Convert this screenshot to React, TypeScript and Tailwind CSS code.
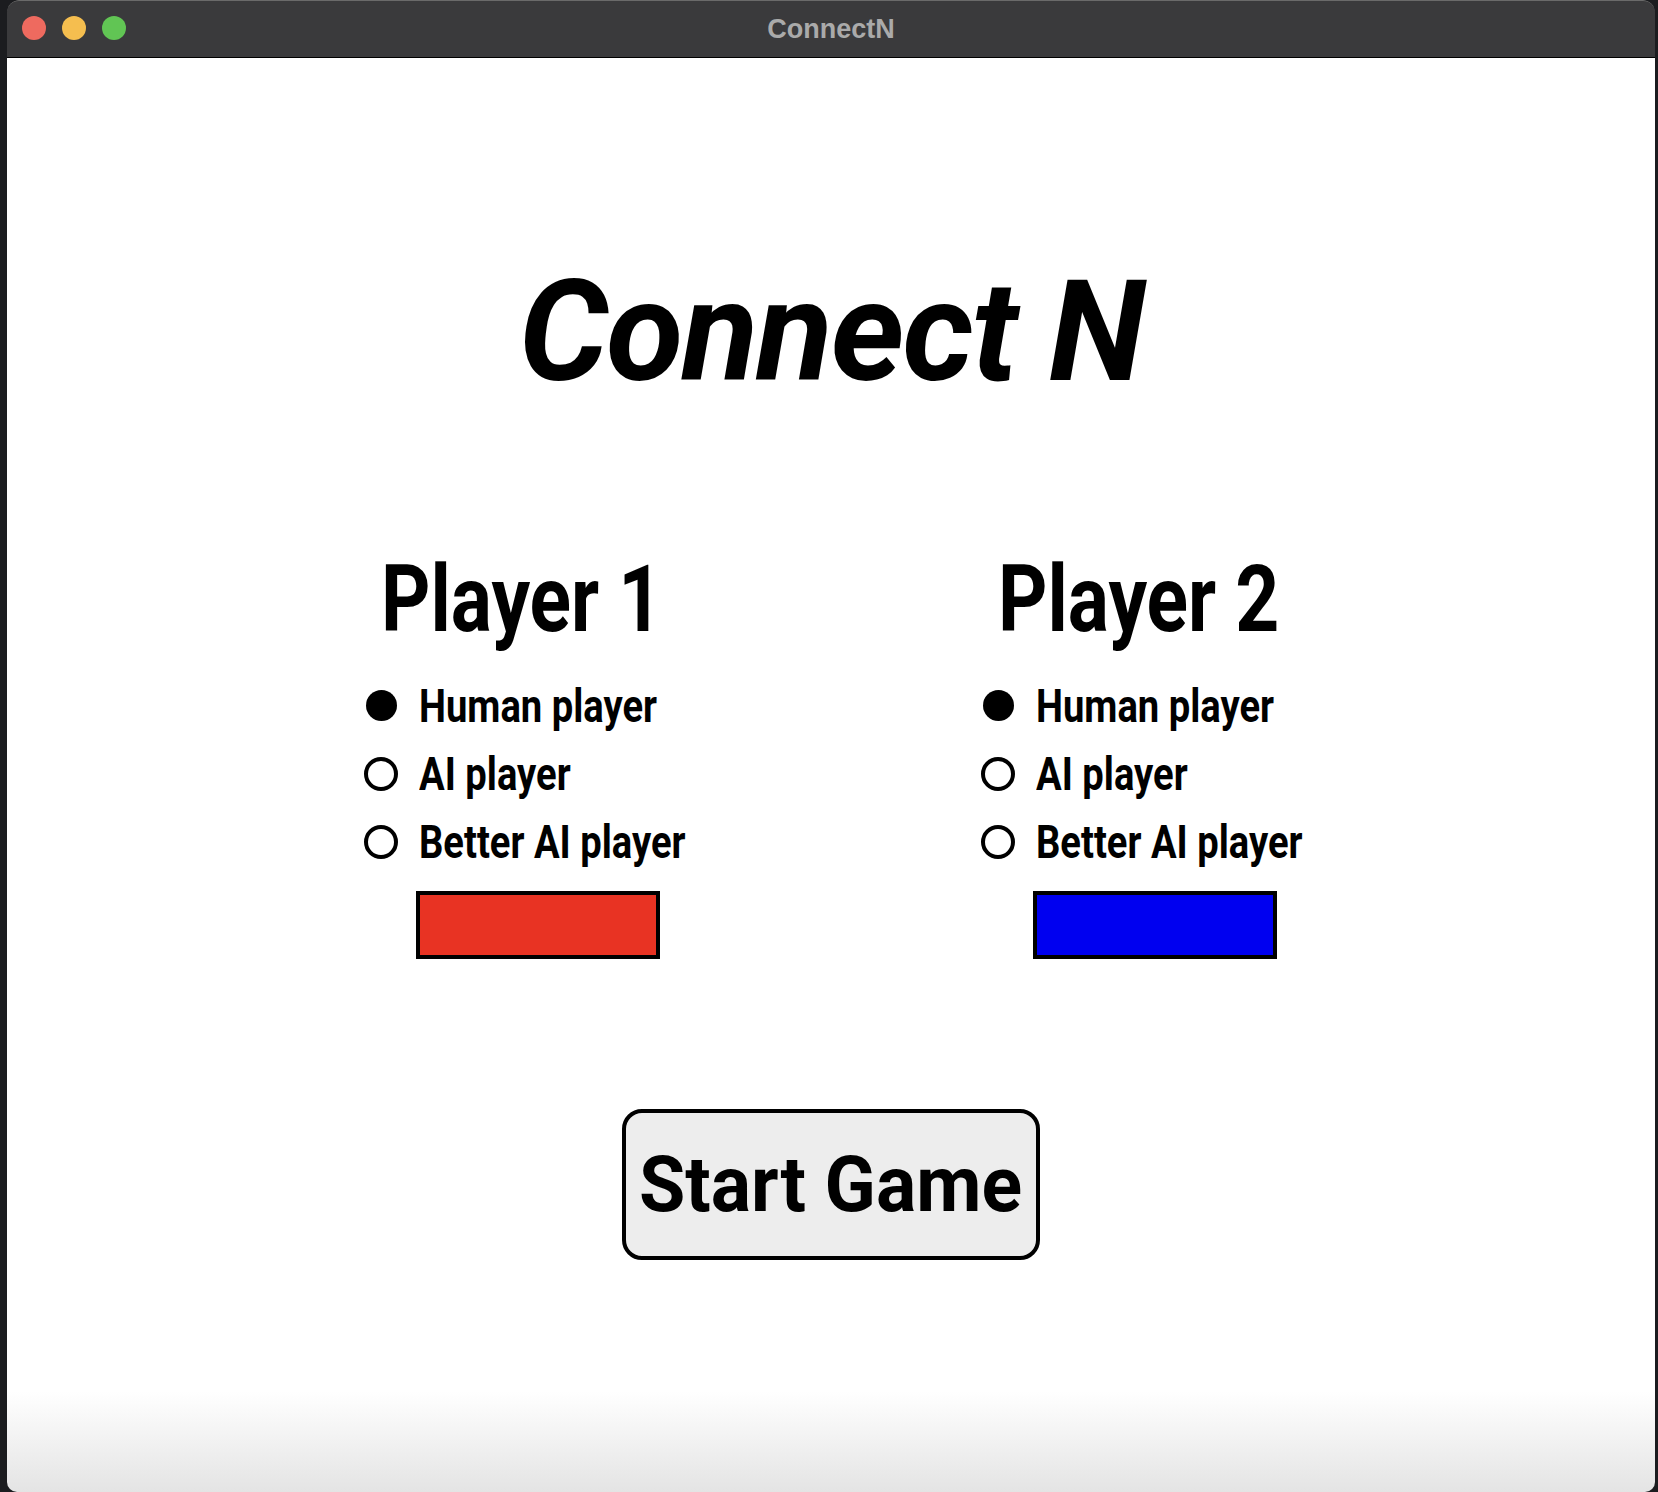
import React from "react";

const font = { fontFamily: "Roboto, 'Liberation Sans', sans-serif" };

function Radio({ checked, label }: { checked: boolean; label: string }) {
  return (
    <div className="flex items-center h-[45px]">
      <div className="w-[34px] h-[34px] flex items-center justify-center shrink-0">
        {checked ? (
          <div className="w-[31px] h-[31px] rounded-full bg-black" />
        ) : (
          <div className="w-[34px] h-[34px] rounded-full border-[4px] border-black bg-white" />
        )}
      </div>
      <span className="ml-[21px] inline-block origin-left scale-x-[0.83] text-[46px] leading-none font-bold text-black whitespace-nowrap">
        {label}
      </span>
    </div>
  );
}

function PlayerColumn({ name, color }: { name: string; color: string }) {
  return (
    <div className="flex flex-col w-[330px]">
      <div className="ml-[17px]">
        <span className="inline-block origin-left scale-x-[0.835] text-[92px] leading-none font-bold text-black whitespace-nowrap">
          {name}
        </span>
      </div>
      <div className="mt-[37px] flex flex-col gap-[23px]">
        <Radio checked label="Human player" />
        <Radio checked={false} label="AI player" />
        <Radio checked={false} label="Better AI player" />
      </div>
      <div
        className={`mt-[27px] ml-[52px] w-[244px] h-[68px] border-[4px] border-black ${color}`}
      />
    </div>
  );
}

export default function App() {
  return (
    <div className="w-[1658px] h-[1492px] bg-[#1b1c1f] overflow-hidden" style={font}>
      <div className="ml-[7px] w-[1648px] h-[1492px] flex flex-col rounded-t-[12px] rounded-b-[10px] overflow-hidden">
        <div className="h-[58px] shrink-0 bg-[#3a3a3c] border-t border-[#6a6a6a] border-b border-b-black rounded-t-[12px] relative flex items-center justify-center">
          <div className="absolute left-[15px] top-[15px] flex gap-[16px]">
            <div className="w-[24px] h-[24px] rounded-full bg-[#ee6a5f]" />
            <div className="w-[24px] h-[24px] rounded-full bg-[#f5be4f]" />
            <div className="w-[24px] h-[24px] rounded-full bg-[#61c554]" />
          </div>
          <span
            className="text-[27px] font-bold text-[#aaaaaa]"
            style={{ fontFamily: "'Liberation Sans', Arial, sans-serif" }}
          >
            ConnectN
          </span>
        </div>
        <div className="flex-1 flex flex-col items-center bg-gradient-to-b from-white from-[93%] to-[#e4e4e4]">
          <h1 className="mt-[203px] text-[141px] leading-none font-bold italic text-black tracking-[-2px] whitespace-nowrap">
            Connect N
          </h1>
          <div className="mt-[152px] flex gap-[287px] self-start ml-[357px]">
            <PlayerColumn name="Player 1" color="bg-[#e83323]" />
            <PlayerColumn name="Player 2" color="bg-[#0000f0]" />
          </div>
          <button className="mt-[150px] w-[418px] h-[151px] rounded-[20px] border-[4px] border-black bg-[#ededed] flex items-center justify-center">
            <span className="inline-block scale-x-[0.965] text-[78px] leading-none font-bold text-black whitespace-nowrap">
              Start Game
            </span>
          </button>
        </div>
      </div>
    </div>
  );
}
